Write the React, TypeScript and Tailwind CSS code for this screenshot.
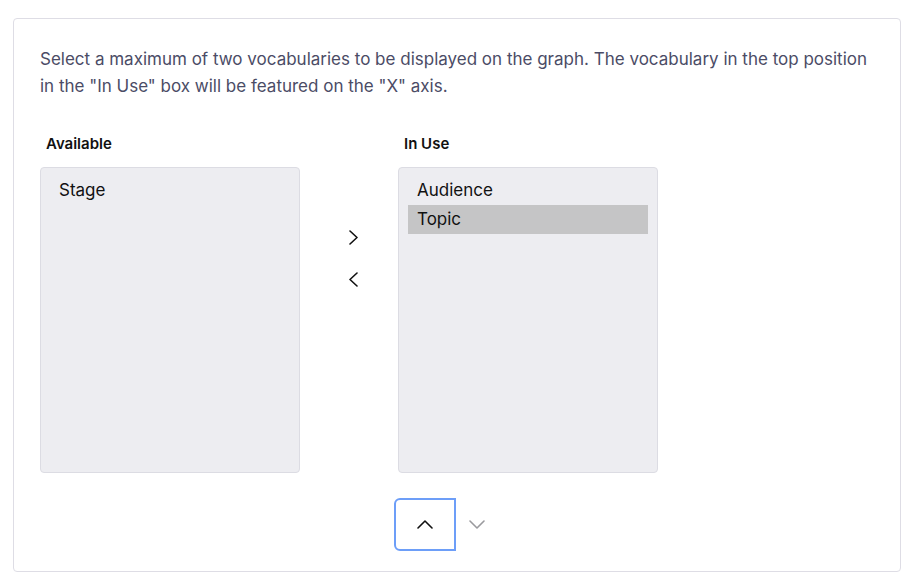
import React from "react";

function Chevron({ dir, className }: { dir: "up" | "down" | "left" | "right"; className?: string }) {
  const paths: Record<string, string> = {
    right: "M1 1 L8 7.5 L1 14",
    left: "M8 1 L1 7.5 L8 14",
    up: "M1 8 L8 1 L15 8",
    down: "M1 1 L8 8 L15 1",
  };
  const vb = dir === "left" || dir === "right" ? "0 0 9 15" : "0 0 16 9";
  const w = dir === "left" || dir === "right" ? 9 : 16;
  const h = dir === "left" || dir === "right" ? 15 : 9;
  return (
    <svg width={w} height={h} viewBox={vb} className={className} fill="none">
      <path d={paths[dir]} stroke="currentColor" strokeWidth="1.6" strokeLinecap="round" strokeLinejoin="round" />
    </svg>
  );
}

export default function App() {
  return (
    <div className="bg-white w-[915px] h-[586px] pt-[18px] pl-[13px]" style={{ fontFamily: "Inter, 'Noto Sans', sans-serif" }}>
      <div className="w-[888px] h-[554px] border border-[#dedde5] rounded-[4px] pt-[27px] px-[26px]">
        <p className="text-[17px] leading-[27px] text-[#4b4c66] pr-[4px]">
          Select a maximum of two vocabularies to be displayed on the graph. The vocabulary in the top position in the "In Use" box will be featured on the "X" axis.
        </p>
        <div className="flex mt-[34px]">
          <div className="w-[260px] flex flex-col">
            <div className="pl-[6px] text-[15px] leading-[20px] font-semibold text-[#111]">Available</div>
            <div className="mt-[13px] h-[306px] bg-[#ededf1] border border-[#dcdce3] rounded-[4px] pt-[8px] px-[9px]">
              <div className="h-[29px] px-[9px] flex items-center text-[17px] text-[#111]">Stage</div>
            </div>
          </div>
          <div className="w-[98px] flex flex-col items-center pl-[8px] pt-[96px] gap-[27px] text-[#111]">
            <Chevron dir="right" />
            <Chevron dir="left" />
          </div>
          <div className="w-[260px] flex flex-col">
            <div className="pl-[6px] text-[15px] leading-[20px] font-semibold text-[#111]">In Use</div>
            <div className="mt-[13px] h-[306px] bg-[#ededf1] border border-[#dcdce3] rounded-[4px] pt-[8px] px-[9px]">
              <div className="h-[29px] px-[9px] flex items-center text-[17px] text-[#111]">Audience</div>
              <div className="h-[29px] px-[9px] flex items-center text-[17px] text-[#111] bg-[#c5c5c6]">Topic</div>
            </div>
          </div>
        </div>
        <div className="flex items-center mt-[25px] pl-[354px]">
          <button className="w-[62px] h-[53px] border-2 border-[#6d9ef8] rounded-l-[6px] flex items-center justify-center text-[#111]">
            <Chevron dir="up" />
          </button>
          <button className="w-[42px] h-[53px] flex items-center justify-center text-[#9a9a9e]">
            <Chevron dir="down" />
          </button>
        </div>
      </div>
    </div>
  );
}
